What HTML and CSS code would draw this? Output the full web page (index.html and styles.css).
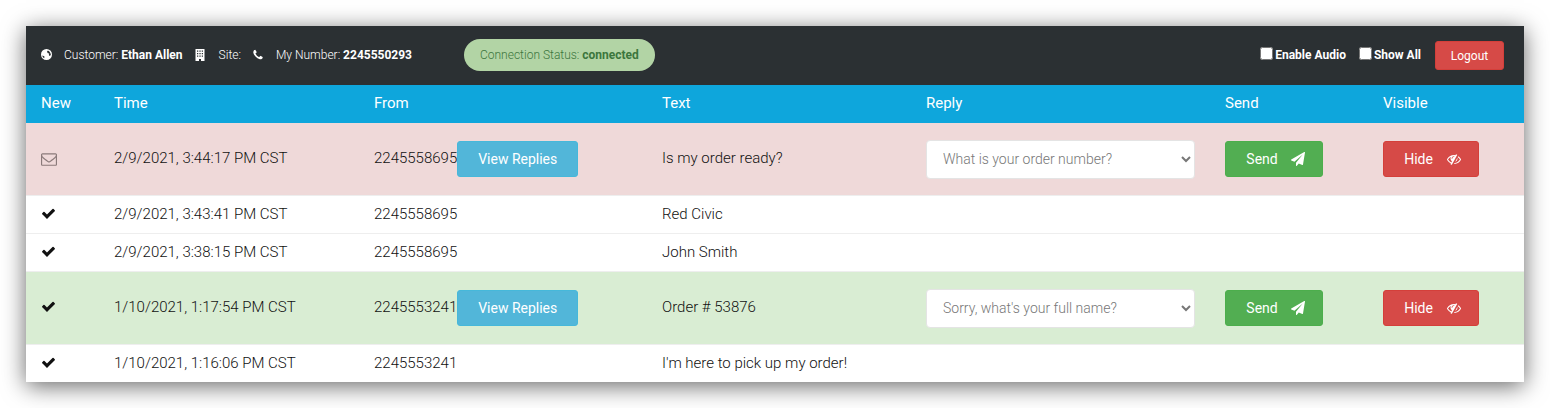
FILE: index.html
```html
<!DOCTYPE html>
<html lang="en">
<head>
    <meta charset="UTF-8">
    <meta name="viewport" content="width=device-width, initial-scale=1.0">
    <title>Messages</title>
    <link rel="stylesheet" href="styles.css">
</head>
<body>

    <svg class="icon-defs" width="0" height="0" aria-hidden="true">
        <symbol id="i-globe" viewBox="0 0 24 24">
            <path fill-rule="evenodd" d="M12 0a12 12 0 1 1 0 24a12 12 0 0 1 0-24zM15 3l-2 3l2 3l3 1l-1 3l2 2l2.500-2C21.500 9 19 5 15 3zM2.800 14l3 1l2 2l-1 3C5 19 3.300 17 2.800 14z"/>
        </symbol>
        <symbol id="i-building" viewBox="0 0 20 24">
            <path fill-rule="evenodd" d="M1 0h18v24h-7v-4h-4v4h-7zM4 3v2.500h2.500v-2.500zM8.800 3v2.500h2.500v-2.500zM13.500 3v2.500h2.500v-2.500zM4 8v2.500h2.500v-2.500zM8.800 8v2.500h2.500v-2.500zM13.500 8v2.500h2.500v-2.500zM4 13v2.500h2.500v-2.500zM8.800 13v2.500h2.500v-2.500zM13.500 13v2.500h2.500v-2.500z"/>
        </symbol>
        <symbol id="i-phone" viewBox="0 0 1792 1792">
            <path d="M1600 1240q0 27-10 70.500t-21 68.500q-21 50-122 106-94 51-186 51-27 0-53-3.500t-57.500-12.500-47-14.500-55.500-20.500-49-18q-98-35-175-83-127-79-264-216t-216-264q-48-77-83-175-3-9-18-49t-20.500-55.500-14.500-47-12.500-57.500-3.500-53q0-92 51-186 56-101 106-122 25-11 68.500-21t70.500-10q14 0 21 3 18 6 53 76 11 19 30 54t35 63.500 31 53.500q3 4 17.500 25t21.500 35.500 7 28.500q0 20-28.500 50t-62 55-62 53-28.500 46q0 9 5 22.500t8.500 20.500 14 24 11.500 19q76 137 174 235t235 174q2 1 19 11.500t24 14 20.500 8.500 22.500 5q18 0 46-28.500t53-62 55-62 50-28.500q14 0 28.500 7t35.500 21.500 25 17.500q25 15 53.500 31t63.500 35 54 30q70 35 76 53 3 7 3 21z"/>
        </symbol>
        <symbol id="i-envelope" viewBox="0 0 1792 1792">
            <path d="M1664 1504v-768q-32 36-69 66-268 206-426 338-51 43-83 67t-86.500 48.500-102.500 24.500h-2q-48 0-102.500-24.500t-86.500-48.500-83-67q-158-132-426-338-37-30-69-66v768q0 13 9.500 22.500t22.500 9.500h1472q13 0 22.500-9.500t9.500-22.500zm0-1051v-24.500l-.5-13-3-12.500-5.500-9-9-7.500-14-2.500h-1472q-13 0-22.500 9.500t-9.500 22.500q0 168 147 284 193 152 401 317 6 5 35 29.500t46 37.500 44.500 31.500 50.500 27.500 43 9h2q20 0 43-9t50.500-27.500 44.500-31.500 46-37.500 35-29.500q208-165 401-317 54-43 100.500-115.500t46.500-131.500zm128-37v1088q0 66-47 113t-113 47h-1472q-66 0-113-47t-47-113v-1088q0-66 47-113t113-47h1472q66 0 113 47t47 113z"/>
        </symbol>
        <symbol id="i-check" viewBox="0 0 1792 1792">
            <path d="M1671 566q0 40-28 68l-724 724-136 136q-28 28-68 28t-68-28l-136-136-362-362q-28-28-28-68t28-68l136-136q28-28 68-28t68 28l294 295 656-657q28-28 68-28t68 28l136 136q28 28 28 68z"/>
        </symbol>
        <symbol id="i-plane" viewBox="0 0 1792 1792">
            <path d="M1764 11q33 24 27 64l-256 1536q-5 29-32 45-14 8-31 8-11 0-24-5l-453-185-242 295q-18 23-49 23-13 0-22-4-19-7-30.500-23.500t-11.500-36.500v-349l864-1059-1069 925-395-162q-37-14-40-55-2-40 32-59l1664-960q15-9 32-9 20 0 36 11z"/>
        </symbol>
        <symbol id="i-eye-slash" viewBox="0 0 1792 1792">
            <path d="M555 1335l78-141q-87-63-136-159t-49-203q0-121 61-225-229 117-381 353 167 258 427 375zm389-759q0-20-14-34t-34-14q-125 0-214.500 89.500t-89.500 214.500q0 20 14 34t34 14 34-14 14-34q0-86 61-147t147-61q20 0 34-14t14-34zm363-191q0 7-1 9-106 189-316 567t-315 566l-49 89q-10 16-28 16-12 0-134-70-16-10-16-28 0-12 44-87-143-65-263.500-173t-208.500-245q-20-31-20-69t20-69q153-235 380-371t496-136q89 0 180 17l54-97q10-16 28-16 5 0 18 6t31 15.500 33 18.500 31.500 18.500 19.500 11.500q16 10 16 27zm37 447q0 139-79 253.500t-209 164.500l280-502q8 45 8 84zm448 128q0 35-20 69-39 64-109 145-150 172-347.500 267t-419.500 95l74-132q212-18 392.500-137t301.500-307q-115-179-282-294l63-112q95 64 182.500 153t144.500 184q20 34 20 69z"/>
        </symbol>
    </svg>

    <div class="panel">
        <div class="topbar">
            <div class="account">
                <svg class="icon icon-globe"><use href="#i-globe"/></svg>
                <span class="account-item">Customer: <b>Ethan Allen</b></span>
                <svg class="icon icon-building"><use href="#i-building"/></svg>
                <span class="account-item account-site">Site:</span>
                <svg class="icon icon-phone"><use href="#i-phone"/></svg>
                <span class="account-item">My Number: <b>2245550293</b></span>
            </div>
            <div class="status-pill">Connection Status: <b>connected</b></div>
            <div class="controls">
                <label class="check"><input type="checkbox">Enable Audio</label>
                <label class="check"><input type="checkbox">Show All</label>
                <button type="button" class="btn btn-red btn-logout">Logout</button>
            </div>
        </div>

        <table class="messages">
            <thead>
                <tr>
                    <th class="col-new">New</th>
                    <th class="col-time">Time</th>
                    <th class="col-from">From</th>
                    <th class="col-text">Text</th>
                    <th class="col-reply">Reply</th>
                    <th class="col-send">Send</th>
                    <th class="col-visible">Visible</th>
                </tr>
            </thead>
            <tbody>
                <tr class="row-action row-unread">
                    <td><svg class="icon icon-envelope"><use href="#i-envelope"/></svg></td>
                    <td>2/9/2021, 3:44:17 PM CST</td>
                    <td><div class="from-cell">2245558695<button type="button" class="btn btn-blue">View Replies</button></div></td>
                    <td>Is my order ready?</td>
                    <td>
                        <select class="reply-select"><option>What is your order number?</option></select>
                    </td>
                    <td><button type="button" class="btn btn-green btn-send">Send<svg class="icon icon-plane"><use href="#i-plane"/></svg></button></td>
                    <td><button type="button" class="btn btn-red btn-hide">Hide<svg class="icon icon-eye"><use href="#i-eye-slash"/></svg></button></td>
                </tr>
                <tr>
                    <td><svg class="icon icon-check"><use href="#i-check"/></svg></td>
                    <td>2/9/2021, 3:43:41 PM CST</td>
                    <td>2245558695</td>
                    <td>Red Civic</td>
                    <td></td>
                    <td></td>
                    <td></td>
                </tr>
                <tr>
                    <td><svg class="icon icon-check"><use href="#i-check"/></svg></td>
                    <td>2/9/2021, 3:38:15 PM CST</td>
                    <td>2245558695</td>
                    <td>John Smith</td>
                    <td></td>
                    <td></td>
                    <td></td>
                </tr>
                <tr class="row-action row-read">
                    <td><svg class="icon icon-check"><use href="#i-check"/></svg></td>
                    <td>1/10/2021, 1:17:54 PM CST</td>
                    <td><div class="from-cell">2245553241<button type="button" class="btn btn-blue">View Replies</button></div></td>
                    <td>Order # 53876</td>
                    <td>
                        <select class="reply-select"><option>Sorry, what's your full name?</option></select>
                    </td>
                    <td><button type="button" class="btn btn-green btn-send">Send<svg class="icon icon-plane"><use href="#i-plane"/></svg></button></td>
                    <td><button type="button" class="btn btn-red btn-hide">Hide<svg class="icon icon-eye"><use href="#i-eye-slash"/></svg></button></td>
                </tr>
                <tr>
                    <td><svg class="icon icon-check"><use href="#i-check"/></svg></td>
                    <td>1/10/2021, 1:16:06 PM CST</td>
                    <td>2245553241</td>
                    <td>I'm here to pick up my order!</td>
                    <td></td>
                    <td></td>
                    <td></td>
                </tr>
            </tbody>
        </table>
    </div>

</body>
</html>
```

FILE: styles.css
```css
html, body { height: 100%; }
body { margin: 0; padding: 26px; box-sizing: border-box; background: #fff; font-family: 'Roboto', sans-serif; font-size: 15px; font-weight: 300; color: #111; overflow: hidden; }
.icon-defs { position: absolute; }

.panel { background: #fff; box-shadow: 0 4px 22px rgba(0, 0, 0, .6); }
.icon { display: inline-block; fill: currentColor; flex: none; }

/* top bar */
.topbar { display: flex; align-items: center; height: 59px; padding: 0 20px 2px 15px; box-sizing: border-box; background: #2b3033; color: #fff; font-size: 12px; font-weight: 300; }
.topbar b { font-weight: 700; }
.account { display: flex; align-items: center; width: 423px; }
.account-item { margin-right: 12px; }
.account-site { margin-right: 11px; }
.icon-globe { width: 11px; height: 11px; margin-right: 12px; }
.icon-building { width: 10px; height: 12px; margin-right: 14px; }
.icon-phone { width: 12px; height: 12px; margin-right: 12px; }
.status-pill { padding: 0 16px; height: 32px; line-height: 32px; border-radius: 16px; background: #b2d4a5; color: #3c763d; font-size: 12px; }
.controls { display: flex; align-items: center; margin-left: auto; }
.check { display: flex; align-items: center; margin-right: 13px; font-weight: 700; font-size: 12px; }
.check + .check { margin-right: 14px; }
.check input { width: 13px; height: 13px; margin: 0 2px 3px 0; }

/* buttons */
.btn { border: 1px solid; border-radius: 3px; color: #fff; font-family: inherit; font-size: 14px; font-weight: 400; cursor: pointer; padding: 0; }
.btn-red { background: #d64a47; border-color: #d43f3a; }
.btn-green { background: #52ae52; border-color: #4cae4c; }
.btn-blue { background: #52b6d9; border-color: #46b8da; width: 121px; height: 36px; }
.btn-logout { width: 69px; height: 29px; margin-top: 2px; font-size: 12px; }
.btn-send { display: flex; align-items: center; justify-content: center; width: 98px; height: 36px; padding-left: 3px; }
.btn-hide { display: flex; align-items: center; justify-content: center; width: 96px; height: 36px; padding-left: 3px; }
.icon-plane { width: 14px; height: 14px; margin-left: 13px; }
.icon-eye { width: 14px; height: 14px; margin-left: 14px; }

/* table */
.messages { width: 100%; border-collapse: collapse; table-layout: fixed; }
.messages th { height: 38px; padding: 0 15px 2px; box-sizing: border-box; background: #0ea6dc; color: #fff; font-size: 15px; font-weight: 400; text-align: left; }
.messages td { padding: 8px 15px; border-top: 1px solid #eee; line-height: 21px; }
.messages tbody tr:first-child td { border-top: 0; }
.col-new { width: 73px; }
.col-time { width: 260px; }
.col-from { width: 288px; }
.col-text { width: 264px; }
.col-reply { width: 299px; }
.col-send { width: 158px; }
.col-visible { width: 156px; }

.messages .row-action td { padding-top: 16px; padding-bottom: 17px; }
.row-unread { background: #efd9d9; }
.row-read { background: #d9edd3; }
.from-cell { display: flex; align-items: center; }
.reply-select { display: block; width: 269px; height: 39px; margin: 1px 0 -1px; padding: 0 12px 2px; border: 1px solid #e4e4e4; border-radius: 4px; background: #fff; color: #777; font-family: inherit; font-size: 14px; font-weight: 300; }

.icon-envelope { display: block; width: 16px; height: 16px; color: #8a7a7a; }
.icon-check { display: block; width: 15px; height: 15px; margin-bottom: 2px; color: #111; }
```
